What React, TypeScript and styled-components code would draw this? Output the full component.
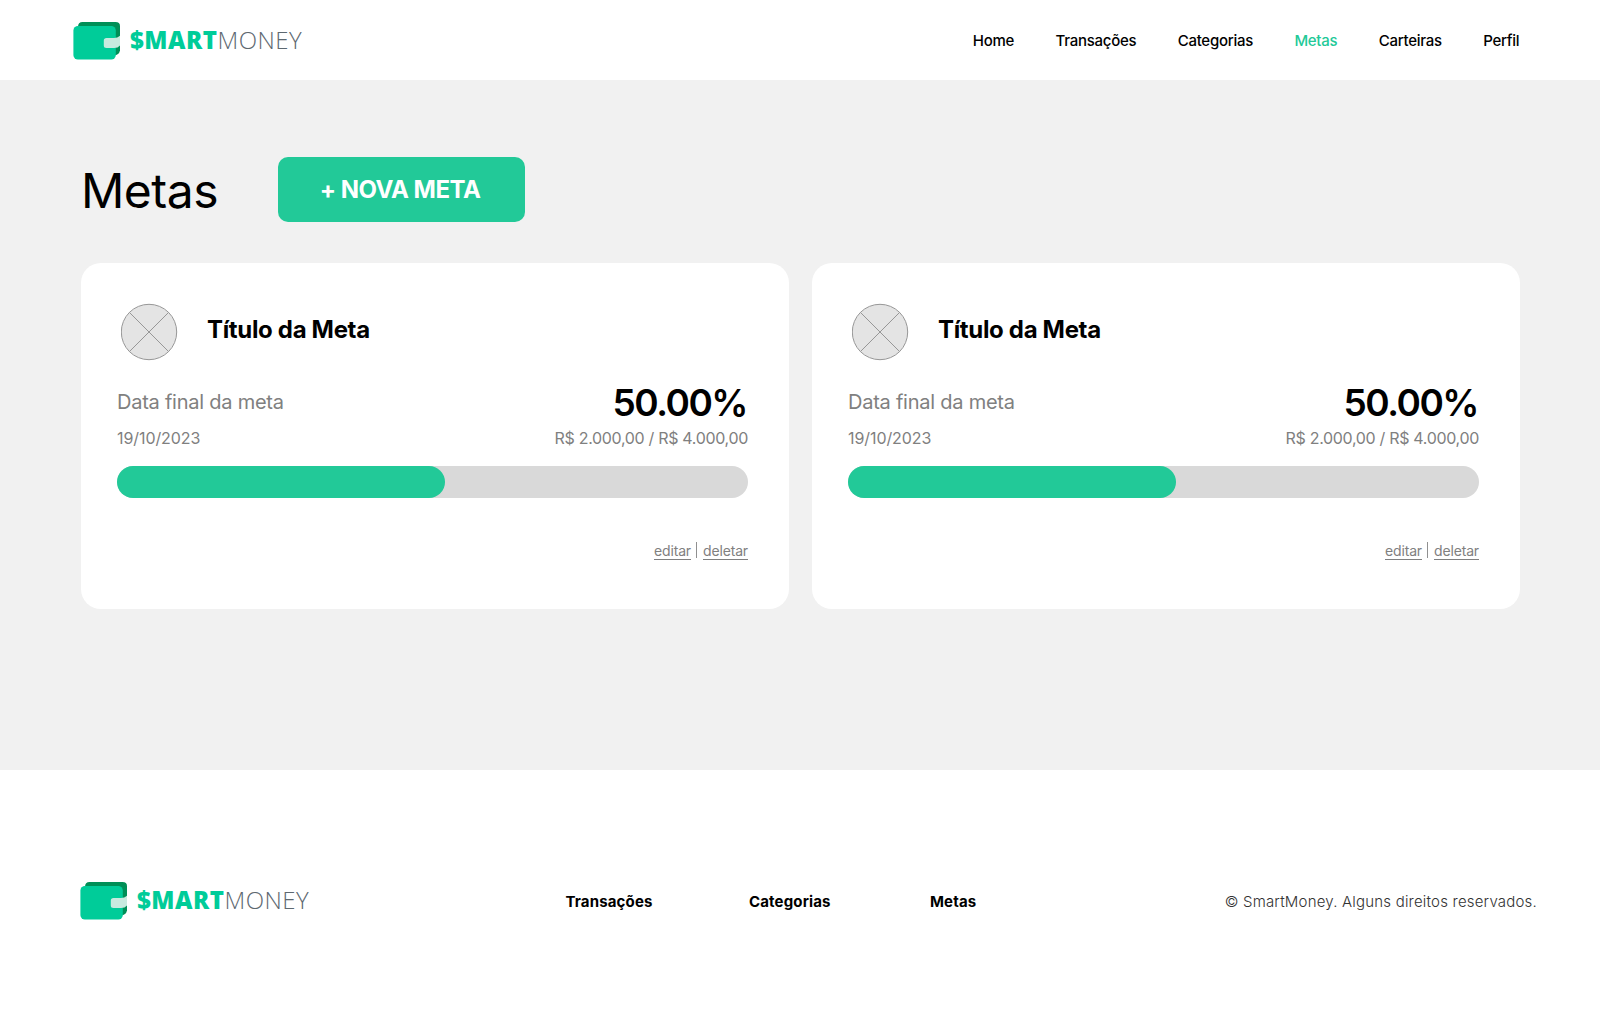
import React from 'react';
import styled, { createGlobalStyle } from 'styled-components';

const green = '#22c998';

const GlobalStyle = createGlobalStyle`
  *, *::before, *::after { box-sizing: border-box; }
  body {
    margin: 0;
    background: #fff;
    color: #000;
    font-family: Inter, "Liberation Sans", sans-serif;
  }
  h1, h2, p { margin: 0; }
`;

const Page = styled.div`
  display: flex;
  flex-direction: column;
  height: 1034px;
  overflow: hidden;
`;

const Header = styled.header`
  flex: none;
  height: 80px;
  padding: 1px 80.8px 0 73px;
  display: flex;
  align-items: center;
  justify-content: space-between;
`;

const Brand = styled.a`
  display: flex;
  align-items: center;
  gap: 9px;
`;

const Wordmark = styled.span`
  padding-bottom: 1px;
  font: 300 24px/36px "Open Sans", sans-serif;
  letter-spacing: 0.5px;
  color: #5d6870;
  white-space: nowrap;

  strong {
    font-weight: 800;
    color: #00cc99;
  }
`;

const Nav = styled.nav`
  display: flex;
  gap: 41.4px;
`;

const NavLink = styled.a<{ $active?: boolean }>`
  font-size: 15px;
  font-weight: 500;
  line-height: 20px;
  letter-spacing: -0.27px;
  color: ${(p) => (p.$active ? green : '#000')};
`;

const Main = styled.main`
  flex: none;
  height: 690px;
  padding: 77px 80px 0 81px;
  background: #f1f1f1;
`;

const TitleRow = styled.div`
  display: flex;
  align-items: center;
  gap: 61px;
  height: 65px;
`;

const PageTitle = styled.h1`
  width: 136px;
  padding-top: 2px;
  font-size: 48px;
  font-weight: 400;
  line-height: 60px;
  letter-spacing: -0.5px;
  white-space: nowrap;
`;

const NewGoalButton = styled.button`
  width: 247px;
  height: 65px;
  padding: 0 3px 0 0;
  border: 0;
  border-radius: 10px;
  background: ${green};
  color: #fff;
  font: 700 24px/30px Inter, sans-serif;
  letter-spacing: -0.5px;
`;

const Cards = styled.section`
  display: grid;
  grid-template-columns: 1fr 1fr;
  gap: 23px;
  margin-top: 41px;
`;

const Card = styled.article`
  height: 346px;
  padding: 40px 41px 0 36px;
  border-radius: 20px;
  background: #fff;
`;

const CardHead = styled.div`
  display: flex;
  gap: 28px;
  height: 58px;
  padding-left: 4px;
`;

const CardTitle = styled.h2`
  padding-top: 12px;
  font-size: 24px;
  font-weight: 700;
  line-height: 30px;
  letter-spacing: -0.33px;
`;

const Split = styled.div<{ $height: number; $top?: number }>`
  display: flex;
  align-items: center;
  justify-content: space-between;
  height: ${(p) => p.$height}px;
  margin-top: ${(p) => p.$top ?? 0}px;
  color: #808080;
`;

const Label = styled.p`
  font-size: 20px;
  letter-spacing: -0.24px;
`;

const Percent = styled.p`
  padding-right: 1px;
  font-size: 37px;
  font-weight: 600;
  letter-spacing: -1.5px;
  color: #000;
`;

const Small = styled.p<{ $spacing: number }>`
  padding-top: 1px;
  font-size: 16px;
  letter-spacing: ${(p) => p.$spacing}px;
`;

const Track = styled.div`
  height: 32px;
  margin-top: 17px;
  border-radius: 16px;
  background: #d9d9d9;
`;

const Fill = styled.div`
  height: 100%;
  border-radius: 16px;
  background: ${green};
`;

const Actions = styled.div`
  display: flex;
  justify-content: flex-end;
  align-items: flex-start;
  margin-top: 43px;
`;

const Action = styled.a`
  height: 19px;
  border-bottom: 1px solid #808080;
  color: #808080;
  font-size: 14px;
  line-height: 20px;
  letter-spacing: -0.15px;
`;

const Divider = styled.span`
  width: 1px;
  height: 16px;
  margin: 1px 6px 0 5px;
  background: #909090;
`;

const Footer = styled.footer`
  flex: none;
  display: grid;
  grid-template-columns: 485.5px 1fr auto;
  align-items: center;
  height: 264px;
  padding: 0 63px 3px 80px;
`;

const FooterNav = styled.nav`
  display: grid;
  grid-template-columns: 183.5px 181px auto;
  padding-top: 2px;
`;

const FooterLink = styled.a`
  font-size: 15px;
  font-weight: 700;
  line-height: 20px;
  letter-spacing: 0.15px;
`;

const Copyright = styled.p`
  padding-top: 2px;
  color: #333;
  font-size: 15px;
  font-weight: 300;
  line-height: 20px;
  letter-spacing: 0.2px;
`;

function Logo() {
  return (
    <Brand>
      <svg width="48" height="38" viewBox="0 0 48 38" aria-hidden="true">
        <path d="M9.5 0H42.5Q47 0 47 4V28.5Q46 33 41 33.5L5 20V5Q5 0 9.5 0Z" fill="#008f57" />
        <rect x="0.4" y="4" width="42.4" height="33.5" rx="4.5" fill="#00cc99" />
        <path d="M33.5 16H41Q44.5 16 47 13.8V23.5Q45 26 41 26H33.5Q30.8 26 30.8 23.5V18.5Q30.8 16 33.5 16Z" fill="#c8eadf" />
      </svg>
      <Wordmark>
        <strong>$MART</strong>MONEY
      </Wordmark>
    </Brand>
  );
}

function Placeholder() {
  return (
    <svg width="58" height="58" viewBox="0 0 58 58" fill="none" stroke="#979797" strokeWidth="1" aria-hidden="true">
      <circle cx="28" cy="29" r="27.7" fill="#e4e4e4" />
      <path d="M8.4 9.4 47.6 48.6M47.6 9.4 8.4 48.6" />
    </svg>
  );
}

const pages = ['Home', 'Transações', 'Categorias', 'Metas', 'Carteiras', 'Perfil'];
const footerPages = ['Transações', 'Categorias', 'Metas'];

const goals = [
  { title: 'Título da Meta', date: '19/10/2023', percent: '50.00%', amount: 'R$ 2.000,00 / R$ 4.000,00', fill: 52 },
  { title: 'Título da Meta', date: '19/10/2023', percent: '50.00%', amount: 'R$ 2.000,00 / R$ 4.000,00', fill: 52 },
];

export default function App() {
  return (
    <Page>
      <GlobalStyle />
      <Header>
        <Logo />
        <Nav>
          {pages.map((name) => (
            <NavLink key={name} $active={name === 'Metas'}>{name}</NavLink>
          ))}
        </Nav>
      </Header>
      <Main>
        <TitleRow>
          <PageTitle>Metas</PageTitle>
          <NewGoalButton>+ NOVA META</NewGoalButton>
        </TitleRow>
        <Cards>
          {goals.map((goal, i) => (
            <Card key={i}>
              <CardHead>
                <Placeholder />
                <CardTitle>{goal.title}</CardTitle>
              </CardHead>
              <Split $height={46} $top={18}>
                <Label>Data final da meta</Label>
                <Percent>{goal.percent}</Percent>
              </Split>
              <Split $height={24}>
                <Small $spacing={-0.08}>{goal.date}</Small>
                <Small $spacing={-0.32}>{goal.amount}</Small>
              </Split>
              <Track>
                <Fill style={{ width: `${goal.fill}%` }} />
              </Track>
              <Actions>
                <Action>editar</Action>
                <Divider />
                <Action>deletar</Action>
              </Actions>
            </Card>
          ))}
        </Cards>
      </Main>
      <Footer>
        <Logo />
        <FooterNav>
          {footerPages.map((name) => (
            <FooterLink key={name}>{name}</FooterLink>
          ))}
        </FooterNav>
        <Copyright>© SmartMoney. Alguns direitos reservados.</Copyright>
      </Footer>
    </Page>
  );
}
